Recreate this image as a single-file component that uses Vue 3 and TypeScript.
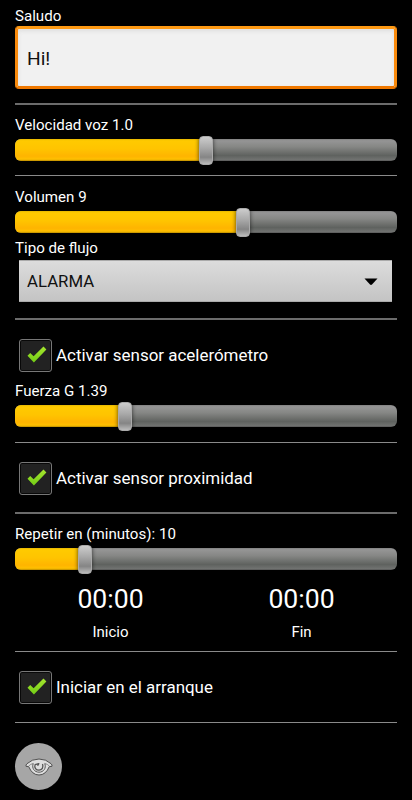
<script setup lang="ts">
import { ref } from 'vue'

const greeting = ref('Hi!')
const speed = { label: 'Velocidad voz 1.0', value: 50.1 }
const volume = { label: 'Volumen 9', value: 59.6 }
const force = { label: 'Fuerza G 1.39', value: 28.9 }
const repeat = { label: 'Repetir en (minutos): 10', value: 18.2 }
const times = [
  { value: '00:00', label: 'Inicio' },
  { value: '00:00', label: 'Fin' },
]
</script>

<template>
  <main class="settings">
    <section class="group thick greeting">
      <label class="label" for="greeting">Saludo</label>
      <input id="greeting" v-model="greeting" class="field" type="text" />
    </section>

    <section class="group speed">
      <div class="label">{{ speed.label }}</div>
      <div class="slider">
        <div class="track"><div class="fill" :style="{ width: speed.value + '%' }"></div></div>
        <div class="thumb" :style="{ left: speed.value + '%' }"></div>
      </div>
    </section>

    <section class="group thick volume">
      <div class="label">{{ volume.label }}</div>
      <div class="slider">
        <div class="track"><div class="fill" :style="{ width: volume.value + '%' }"></div></div>
        <div class="thumb" :style="{ left: volume.value + '%' }"></div>
      </div>
      <div class="label stream">Tipo de flujo</div>
      <div class="select">
        <span>ALARMA</span>
        <svg width="14" height="8" viewBox="0 0 14 8"><path d="M.5 .5h13L8 6.6q-1 .8-2 0z" fill="#000" /></svg>
      </div>
    </section>

    <section class="group accel">
      <div class="check">
        <span class="box">
          <svg viewBox="0 0 20 18"><use href="#tick" /></svg>
        </span>
        <span class="check-text">Activar sensor acelerómetro</span>
      </div>
      <div class="label">{{ force.label }}</div>
      <div class="slider">
        <div class="track"><div class="fill" :style="{ width: force.value + '%' }"></div></div>
        <div class="thumb" :style="{ left: force.value + '%' }"></div>
      </div>
    </section>

    <section class="group thick proximity">
      <div class="check">
        <span class="box">
          <svg viewBox="0 0 20 18"><use href="#tick" /></svg>
        </span>
        <span class="check-text">Activar sensor proximidad</span>
      </div>
    </section>

    <section class="group repeat">
      <div class="label">{{ repeat.label }}</div>
      <div class="slider">
        <div class="track"><div class="fill" :style="{ width: repeat.value + '%' }"></div></div>
        <div class="thumb" :style="{ left: repeat.value + '%' }"></div>
      </div>
      <div class="times">
        <div v-for="time in times" :key="time.label" class="time">
          <div class="clock">{{ time.value }}</div>
          <div class="caption">{{ time.label }}</div>
        </div>
      </div>
    </section>

    <section class="group boot">
      <div class="check">
        <span class="box">
          <svg viewBox="0 0 20 18">
            <defs>
              <linearGradient id="green" x1="0" y1="0" x2="0" y2="1">
                <stop offset="0" stop-color="#a6e62e" />
                <stop offset="1" stop-color="#72cc16" />
              </linearGradient>
              <path id="tick" d="M.5 9.700 3.200 7 6.600 10.200 16.500.6 19.400 3.400 6.900 16.500z" fill="url(#green)" />
            </defs>
            <use href="#tick" />
          </svg>
        </span>
        <span class="check-text">Iniciar en el arranque</span>
      </div>
    </section>

    <button class="eye" type="button" aria-label="Ver">
      <svg width="28" height="18" viewBox="0 0 28 18" fill="none" stroke-linejoin="round">
        <path d="M1 8.3Q.5 7 2 5.7Q7 1 14 1T26 5.7Q27.500 7 27 8.300L24.300 8.600Q20.800 17 14 17T3.700 8.600z" fill="#dedede" stroke="#505050" stroke-width="1" />
        <path d="M3.500 8.200Q5.500 6 8.400 5.400M24.500 8.200Q22.500 6 19.600 5.400" stroke="#777" stroke-width=".8" />
        <path d="M8.200 5.600C6.500 10.200 9.500 14.200 14 14.200S21.500 10.200 19.800 5.600" stroke="#555" stroke-width="1" />
        <path d="M12.600 7.800 13.800 5.600 10.100 6.600C9 9.700 11 12.200 14 12.200S18.800 9.500 17.500 6" stroke="#555" stroke-width="1.300" />
      </svg>
    </button>
  </main>
</template>

<style>
html,
body {
  margin: 0;
  background: #000;
}
</style>

<style scoped>
.settings {
  box-sizing: border-box;
  width: 412px;
  height: 800px;
  padding: 6px 15px 0;
  overflow: hidden;
  background: #000;
  color: #fff;
  font-family: Roboto, sans-serif;
}
.group {
  box-sizing: border-box;
  border-bottom: 1px solid #8a8a8a;
}
.thick {
  border-bottom: 2px solid #6b6b6b;
}
.greeting { height: 99px; }
.speed { height: 71px; padding-top: 10px; }
.volume { height: 144px; padding-top: 11px; }
.accel { height: 123px; padding-top: 19px; }
.proximity { height: 71px; padding-top: 19px; }
.repeat { height: 138px; padding-top: 10px; }
.boot { height: 71px; padding-top: 19px; }
.label {
  display: block;
  height: 20px;
  font-size: 15.100px;
  line-height: 20px;
  white-space: nowrap;
}
.field {
  display: block;
  box-sizing: border-box;
  width: 382px;
  height: 63px;
  margin: 0;
  padding: 2px 9px 0;
  border: 3px solid;
  border-color: #ff9a14 #f98a0c #ef7800;
  border-radius: 4px;
  outline: none;
  background: #f1f1f1;
  box-shadow: inset 0 2px 4px #dedede;
  color: #111;
  font: 400 19.200px Roboto, sans-serif;
}
.slider {
  position: relative;
  height: 30px;
  padding-top: 4px;
  box-sizing: border-box;
}
.track {
  height: 22px;
  overflow: hidden;
  border-radius: 6px;
  background: linear-gradient(#808080, #959595 8%, #868785 35%, #5f625f 75%, #707270 94%, #555);
}
.fill {
  height: 100%;
  background: linear-gradient(#e5b600, #ffca00 8%, #ffc400 45%, #ffb400 78%, #ffc000 92%, #b98a00);
}
.thumb {
  position: absolute;
  top: 1px;
  width: 14px;
  height: 29px;
  box-sizing: border-box;
  transform: translateX(-50%);
  border: 1px solid #aaa;
  border-radius: 4px;
  background: linear-gradient(#ccc, #a9a9a9 40%, #858585 75%, #bbb);
  box-shadow: 0 0 4px rgba(0, 0, 0, 0.65);
}
.stream {
  margin-top: 1px;
}
.select {
  display: flex;
  box-sizing: border-box;
  align-items: center;
  justify-content: space-between;
  height: 42px;
  margin: 2px 5px 0 4px;
  padding: 0 14px 0 8px;
  border-top: 1px solid #aaa;
  border-bottom: 1px solid #aaa;
  background: linear-gradient(#dcdcdc, #c4c4c4);
  color: #111;
  font-size: 16.800px;
}
.select svg {
  margin-top: 2px;
}
.check {
  display: flex;
  align-items: center;
  gap: 4px;
  height: 33px;
  padding-left: 4px;
  font-size: 16.950px;
  white-space: nowrap;
}
.check-text {
  padding-bottom: 1px;
}
.accel .check {
  margin-bottom: 9px;
}
.box {
  display: flex;
  box-sizing: border-box;
  width: 33px;
  height: 33px;
  padding: 6px 0 0 7px;
  border: 1.500px solid #777;
  border-radius: 3px;
  background: #222;
  box-shadow: inset 0 0 0 1px #080808;
}
.box svg {
  width: 20px;
  height: 18px;
}
.times {
  display: grid;
  grid-template-columns: 1fr 1fr;
  padding-top: 7px;
  text-align: center;
}
.clock {
  height: 36px;
  font-size: 26.600px;
  line-height: 36px;
}
.caption {
  height: 20px;
  margin-top: 5px;
  font-size: 15px;
  line-height: 20px;
}
.eye {
  display: grid;
  place-items: center;
  width: 47px;
  height: 47px;
  margin: 20px 0 0;
  padding: 0;
  border: 0;
  border-radius: 50%;
  background: #a6a6a6;
}
</style>
